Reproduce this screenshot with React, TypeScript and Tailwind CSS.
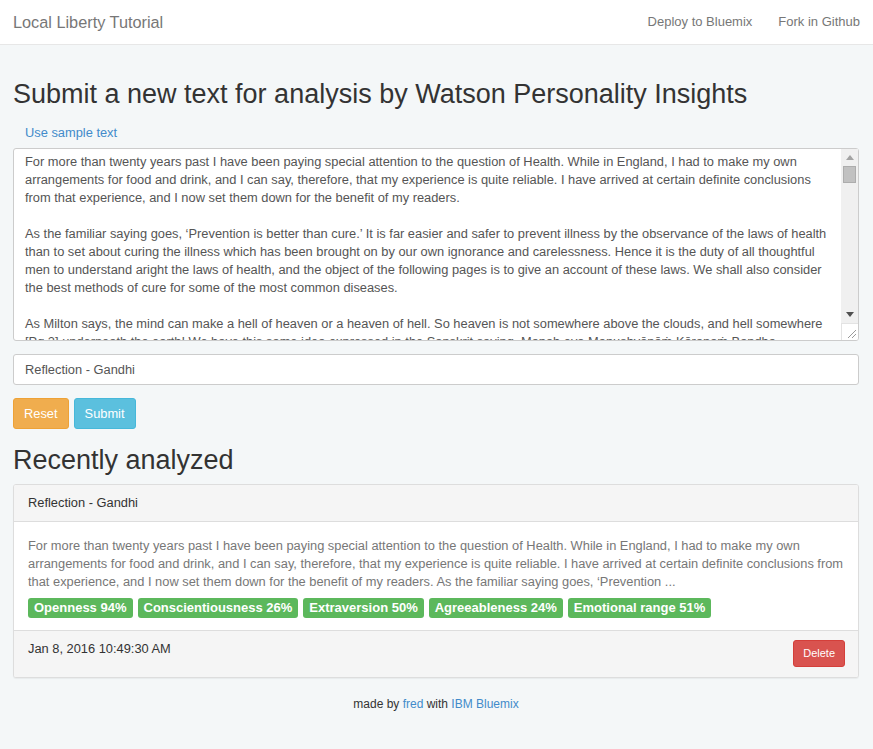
import React from "react";

const sample = `For more than twenty years past I have been paying special attention to the question of Health. While in England, I had to make my own arrangements for food and drink, and I can say, therefore, that my experience is quite reliable. I have arrived at certain definite conclusions from that experience, and I now set them down for the benefit of my readers.

As the familiar saying goes, ‘Prevention is better than cure.’ It is far easier and safer to prevent illness by the observance of the laws of health than to set about curing the illness which has been brought on by our own ignorance and carelessness. Hence it is the duty of all thoughtful men to understand aright the laws of health, and the object of the following pages is to give an account of these laws. We shall also consider the best methods of cure for some of the most common diseases.

As Milton says, the mind can make a hell of heaven or a heaven of hell. So heaven is not somewhere above the clouds, and hell somewhere [Pg 2] underneath the earth! We have this same idea expressed in the Sanskrit saying, Manaḥ eva Manushyāṇāṁ Kāraṇaṁ Bandha Mokshayoḥ—man's captivity or freedom is dependant on the state of his mind.`;

const traits = [
  "Openness 94%",
  "Conscientiousness 26%",
  "Extraversion 50%",
  "Agreeableness 24%",
  "Emotional range 51%",
];

// classic windows-style scrollbar drawn over the textarea's right edge
function FakeScrollbar() {
  return (
    <div className="absolute top-[1px] right-[1px] bottom-[1px] w-[17px] flex flex-col">
      <div className="h-[17px] bg-[#f0f0f0] flex items-center justify-center">
        <svg width="8" height="5" viewBox="0 0 8 5">
          <polygon points="4,0 8,5 0,5" fill="#a3a3a3" />
        </svg>
      </div>
      <div className="flex-1 bg-[#f0f0f0] px-[2px]">
        <div className="h-[17px] bg-[#c1c1c1] border border-[#adadad]" />
      </div>
      <div className="h-[17px] bg-[#f0f0f0] flex items-center justify-center">
        <svg width="8" height="5" viewBox="0 0 8 5">
          <polygon points="0,0 8,0 4,5" fill="#505050" />
        </svg>
      </div>
      <div className="h-[17px] bg-white border-t border-l border-[#e3e3e3] rounded-br-[2px] flex items-end justify-end p-[2px]">
        <svg width="9" height="9" viewBox="0 0 9 9">
          <line x1="9" y1="1" x2="1" y2="9" stroke="#9a9a9a" strokeWidth="1" />
          <line x1="9" y1="5" x2="5" y2="9" stroke="#9a9a9a" strokeWidth="1" />
        </svg>
      </div>
    </div>
  );
}

export default function App() {
  return (
    <div className="min-h-screen bg-[#f4f7f8] text-[#333] font-['Liberation_Sans',Arial,sans-serif] text-[12.85px]">
      {/* navbar */}
      <nav className="h-[45px] bg-white border-b border-[#e7e7e7] flex items-center justify-between px-[13px]">
        <span className="text-[16.3px] text-[#777]">Local Liberty Tutorial</span>
        <div className="flex gap-[26px] text-[13px] text-[#777]">
          <span>Deploy to Bluemix</span>
          <span>Fork in Github</span>
        </div>
      </nav>

      <div className="px-[13px] pr-[14px]">
        <h1 className="text-[27px] leading-none mt-[36px] mb-[16px] text-[#333]">
          Submit a new text for analysis by Watson Personality Insights
        </h1>
        <div className="pl-[12px] mb-[6px] text-[#428bca] leading-[18px]">Use sample text</div>
        <div className="relative">
          <textarea
            readOnly
            defaultValue={sample}
            className="block w-full h-[193px] bg-white border border-[#ccc] rounded-[3px] pl-[11px] pr-[29px] py-[4px] leading-[18px] text-[#555] outline-none resize-none overflow-hidden"
          />
          <FakeScrollbar />
        </div>
        <input
          readOnly
          defaultValue="Reflection - Gandhi"
          className="block w-full h-[31px] mt-[13px] bg-white border border-[#ccc] rounded-[3px] px-[11px] text-[#555] outline-none"
        />
        <div className="flex gap-[5px] mt-[13px]">
          <button className="h-[31px] px-[10px] rounded-[3px] bg-[#f0ad4e] border border-[#eea236] text-white">
            Reset
          </button>
          <button className="h-[31px] px-[10px] rounded-[3px] bg-[#5bc0de] border border-[#46b8da] text-white">
            Submit
          </button>
        </div>

        <h2 className="text-[27px] leading-none mt-[18px] mb-[10px] text-[#333]">Recently analyzed</h2>

        <div className="bg-white border border-[#ddd] rounded-[3px] shadow-[0_1px_1px_rgba(0,0,0,0.05)] overflow-hidden">
          <div className="h-[37px] bg-[#f5f5f5] border-b border-[#ddd] px-[14px] flex items-center text-[#333]">
            Reflection - Gandhi
          </div>
          <div className="px-[14px] pt-[15px] pb-[12px]">
            <p className="text-[#777] leading-[18px]">
              For more than twenty years past I have been paying special attention to the question of Health. While in England, I had to make my own arrangements for food and drink, and I can say, therefore, that my experience is quite reliable. I have arrived at certain definite conclusions from that experience, and I now set them down for the benefit of my readers. As the familiar saying goes, ‘Prevention ...
            </p>
            <div className="flex flex-wrap gap-[5px] mt-[7px]">
              {traits.map((t) => (
                <span
                  key={t}
                  className="h-[20px] px-[6px] rounded-[3px] bg-[#5cb85c] text-white font-bold text-[13px] leading-[20px]"
                >
                  {t}
                </span>
              ))}
            </div>
          </div>
          <div className="bg-[#f5f5f5] border-t border-[#ddd] px-[13px] pt-[9px] pb-[10px] flex justify-between items-start">
            <span className="text-[#333] leading-[18px] pl-[1px]">Jan 8, 2016 10:49:30 AM</span>
            <button className="h-[27px] px-[9px] rounded-[3px] bg-[#d9534f] border border-[#d43f3a] text-white text-[11px]">
              Delete
            </button>
          </div>
        </div>

        <footer className="text-center text-[12px] pt-[17px] pb-[30px] text-[#333]">
          made by <span className="text-[#428bca]">fred</span> with{" "}
          <span className="text-[#428bca]">IBM Bluemix</span>
        </footer>
      </div>
    </div>
  );
}
